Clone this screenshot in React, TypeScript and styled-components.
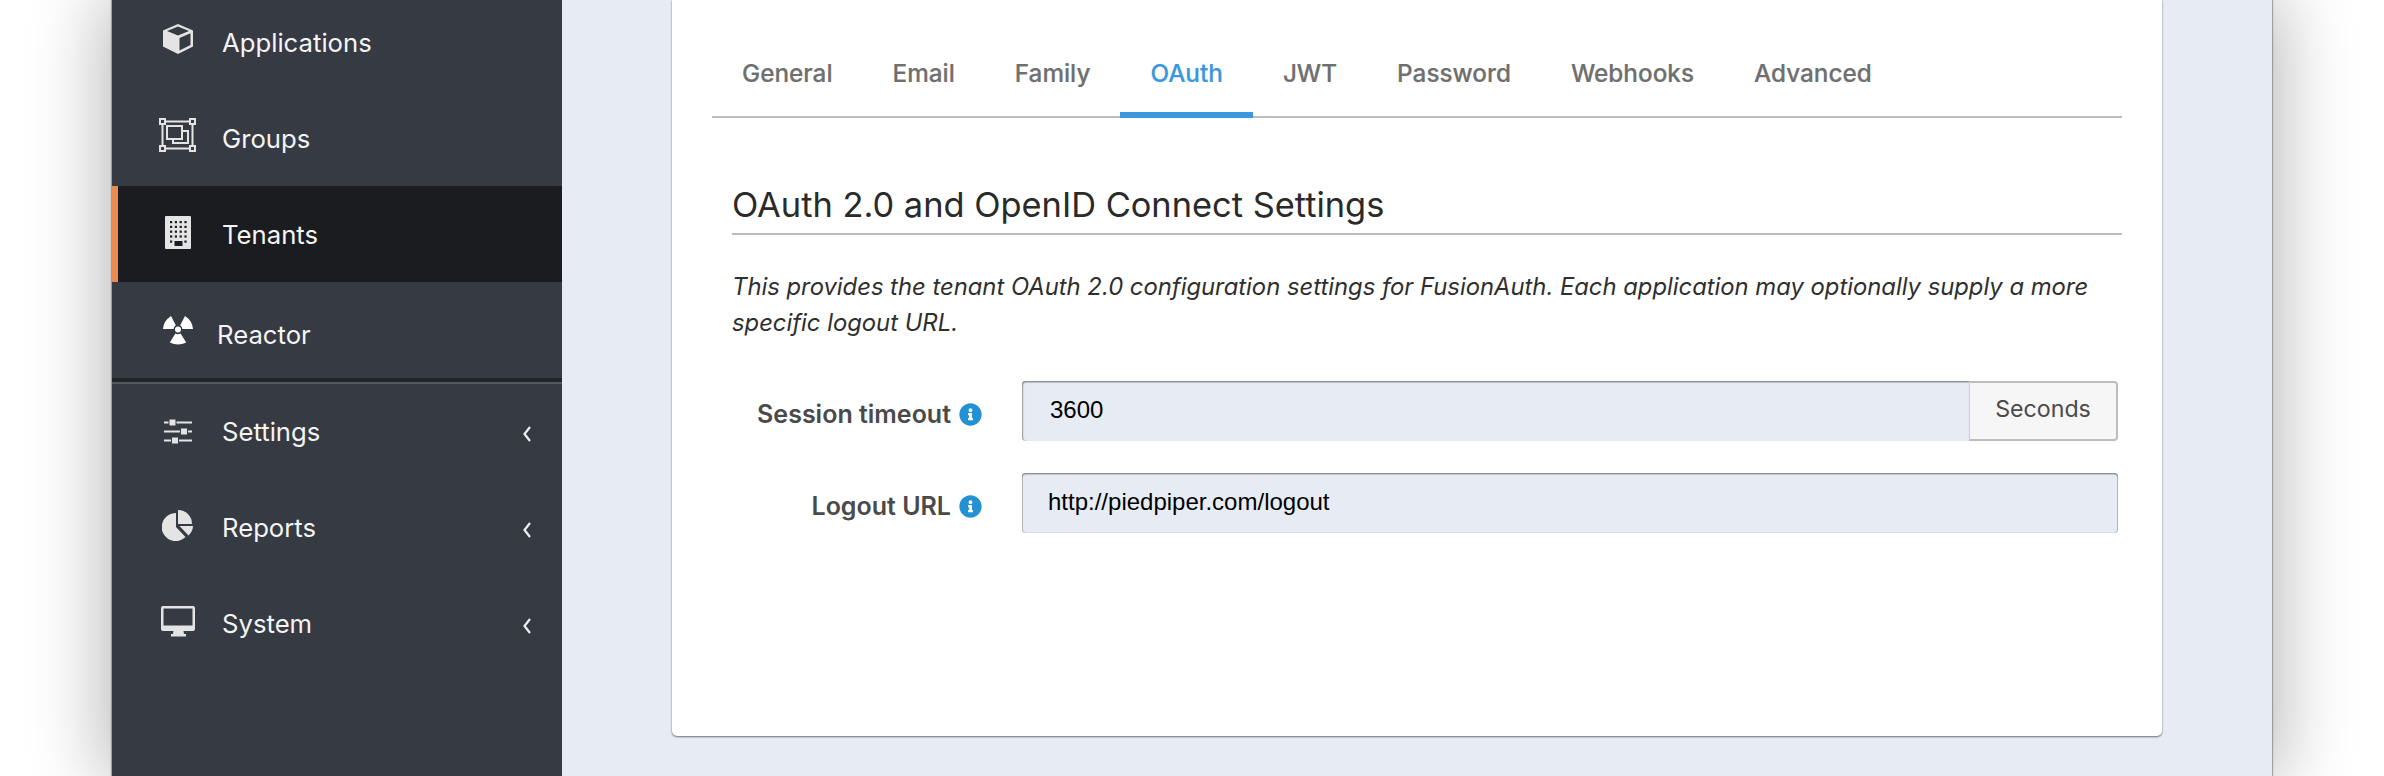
import React from 'react';
import styled, { createGlobalStyle } from 'styled-components';
import { FaInfoCircle } from 'react-icons/fa';

const GlobalStyle = createGlobalStyle`
  html, body {
    margin: 0;
    padding: 0;
    background: #fff;
    overflow: hidden;
  }
  * {
    box-sizing: border-box;
  }
`;

const Page = styled.div`
  height: 776px;
  padding: 0 112px 0 112px;
  overflow: hidden;
  font-family: Inter, 'Noto Sans', sans-serif;
`;

const Shell = styled.div`
  display: flex;
  height: 776px;
  background: #e7ecf4;
  box-shadow: 0 0 1px 1px rgba(110, 110, 110, 0.55), 0 0 70px 6px rgba(0, 0, 0, 0.3);
`;

const Sidebar = styled.aside`
  width: 450px;
  flex: none;
  background: #363a42;
  overflow: hidden;
`;

const NavList = styled.nav`
  margin-top: -6px;
`;

const NavRow = styled.div<{ $active?: boolean }>`
  display: flex;
  align-items: center;
  height: 96px;
  padding-left: ${p => (p.$active ? '34.5px' : '40.5px')};
  padding-right: 30px;
  background: ${p => (p.$active ? '#1b1c1f' : 'transparent')};
  border-left: ${p => (p.$active ? '6px solid #ea8c50' : 'none')};
  color: #f4f4f4;
`;

const IconSlot = styled.span<{ $lift: number }>`
  display: flex;
  justify-content: center;
  width: 50px;
  flex: none;
  margin-bottom: ${p => p.$lift}px;
`;

const NavLabel = styled.span<{ $nudge?: number; $drop?: number }>`
  margin-left: ${p => 19.5 + (p.$nudge ?? 0)}px;
  margin-top: ${p => p.$drop ?? 0}px;
  font-size: 25.7px;
  font-weight: 400;
  line-height: 30px;
  flex: 1;
`;

const NavChevron = styled.svg`
  flex: none;
  width: 10px;
  height: 18px;
  margin-top: 4px;
`;

const NavDivider = styled.div`
  height: 6px;
  background: #22252a;
  border-bottom: 2px solid #55585e;
`;

const Main = styled.main`
  flex: 1;
  padding: 0 110px 40px 110px;
  min-width: 0;
`;

const Card = styled.section`
  height: 736px;
  background: #fff;
  border-radius: 0 0 5px 5px;
  box-shadow: 0 1px 2px rgba(70, 75, 85, 0.75), 0 0 1px rgba(90, 95, 105, 0.5);
  padding: 40px 40px 0 40px;
`;

const TabBar = styled.div`
  display: flex;
  height: 78px;
  border-bottom: 2px solid #bcbcbc;
`;

const Tab = styled.div<{ $active?: boolean }>`
  height: 78px;
  padding: 0 30px;
  display: flex;
  align-items: center;
  padding-bottom: 12px;
  font-size: 24.3px;
  font-weight: 500;
  -webkit-text-stroke: 0.2px currentColor;
  color: ${p => (p.$active ? '#3b97de' : '#6f6f6f')};
  border-bottom: ${p => (p.$active ? '6px solid #3b97de' : 'none')};
  ${p => p.$active && 'padding-bottom: 6px;'}
`;

const Section = styled.div`
  padding-left: 20px;
`;

const Heading = styled.h2`
  margin: 66px 0 0 0;
  height: 51px;
  font-size: 34.4px;
  line-height: 42px;
  font-weight: 400;
  color: #2a2a2a;
  border-bottom: 2px solid #bcbcbc;
`;

const Intro = styled.p`
  margin: 34px 0 0 0;
  font-size: 23.8px;
  line-height: 36px;
  font-style: italic;
  color: #2f2f2f;
`;

const Form = styled.div`
  display: flex;
  flex-direction: column;
  gap: 32px;
  margin-top: 40px;
`;

const FieldRow = styled.div`
  display: flex;
  align-items: center;
  height: 60px;
`;

const FieldLabel = styled.label`
  display: flex;
  align-items: center;
  justify-content: flex-end;
  gap: 8px;
  width: 250px;
  flex: none;
  margin-top: 6px;
  font-size: 25px;
  font-weight: 600;
  color: #4a4a4a;
`;

const InfoIcon = styled(FaInfoCircle)`
  width: 23px;
  height: 23px;
  color: #2491d4;
`;

const FieldControl = styled.div`
  display: flex;
  flex: 1;
  height: 60px;
  margin-left: 40px;
  margin-right: 4px;
`;

const TextInput = styled.div<{ $grouped?: boolean; $left: number }>`
  flex: 1;
  height: 60px;
  padding-left: ${p => p.$left}px;
  padding-bottom: 2px;
  display: flex;
  align-items: center;
  font-family: 'Liberation Sans', Arial, sans-serif;
  font-size: 24px;
  color: #000;
  background: #e7ecf4;
  border-radius: ${p => (p.$grouped ? '4px 0 0 4px' : '4px')};
  box-shadow: ${p =>
    p.$grouped
      ? 'inset 0 1px 0 #8e9094, inset 0 2px 1px rgba(0, 0, 0, 0.18), inset 1px 0 0 #a8aaae, inset 2px 0 1px rgba(0, 0, 0, 0.08)'
      : 'inset 0 1px 0 #8e9094, inset 0 2px 1px rgba(0, 0, 0, 0.18), inset 1px 0 0 #b4b6ba, inset -1px 0 0 #b4b6ba, inset 0 -1px 0 #dde1e7'};
`;

const Addon = styled.div`
  width: 149px;
  flex: none;
  display: flex;
  align-items: center;
  justify-content: center;
  padding-bottom: 5px;
  font-size: 23.2px;
  color: #4a4a4a;
  background: #f6f6f6;
  border: 2px solid #bdbdbd;
  border-left: 1px solid #d0d0d0;
  border-radius: 0 4px 4px 0;
`;

const ICON = '#e4e4e4';

const CubeIcon = () => (
  <svg width="30" height="30" viewBox="0 0 30 30">
    <path
      fill={ICON}
      fillRule="evenodd"
      d="M15 0 L30 6.5 V22.5 L15 30 L0 22.5 V6.5 Z M4 7 L15 11.5 L26 7 L15 2.6 Z M16.5 14 V26.5 L27.5 21 V9.2 Z"
    />
  </svg>
);

const GroupsIcon = () => (
  <svg width="37" height="34" viewBox="0 0 37 34" fill="none" stroke={ICON} strokeWidth="2">
    <rect x="1" y="1" width="5" height="5" />
    <rect x="31" y="1" width="5" height="5" />
    <rect x="1" y="28" width="5" height="5" />
    <rect x="31" y="28" width="5" height="5" />
    <path d="M6 3.5 H31 M6 30.5 H31 M3.5 6 V28 M33.5 6 V28" />
    <rect x="8" y="8" width="15" height="13" />
    <path d="M23 13 H29 V25 H14 V21" />
  </svg>
);

const BuildingIcon = () => {
  const dots: React.ReactNode[] = [];
  for (let r = 0; r < 4; r += 1) {
    for (let c = 0; c < 4; c += 1) {
      dots.push(<rect key={`${r}-${c}`} x={5 + c * 4.8} y={5 + r * 4.8} width="2.2" height="2.2" fill="#1b1c1f" />);
    }
  }
  return (
    <svg width="26" height="33" viewBox="0 0 26 33">
      <rect x="0" y="0" width="26" height="33" rx="1" fill={ICON} />
      {dots}
      <rect x="5" y="24.5" width="2.2" height="2.2" fill="#1b1c1f" />
      <rect x="19.4" y="24.5" width="2.2" height="2.2" fill="#1b1c1f" />
      <rect x="9.5" y="25" width="8" height="5" fill="#1b1c1f" />
    </svg>
  );
};

const ReactorIcon = () => (
  <svg width="30" height="29" viewBox="0 0 30 29">
    <g fill="#fff">
      <circle cx="15" cy="13.5" r="3" />
      <path d="M8 0 L12.8 9.2 Q11 10.4 10.6 13 H0 Q0.5 5 8 0 Z" />
      <path d="M22 0 Q29.5 5 30 13 H19.4 Q19 10.4 17.2 9.2 Z" />
      <path d="M12.4 17.6 Q15 19 17.6 17.6 L23.2 26.6 Q15 30.6 6.8 26.6 Z" />
    </g>
  </svg>
);

const SlidersIcon = () => (
  <svg width="28" height="25" viewBox="0 0 28 25" fill={ICON}>
    <rect x="0" y="2.5" width="28" height="2" />
    <rect x="0" y="11.5" width="28" height="2" />
    <rect x="0" y="20.5" width="28" height="2" />
    <rect x="5" y="0" width="7" height="7" rx="1" stroke="#363a42" strokeWidth="1" />
    <rect x="16.5" y="9" width="7" height="7" rx="1" stroke="#363a42" strokeWidth="1" />
    <rect x="7.5" y="18" width="7" height="7" rx="1" stroke="#363a42" strokeWidth="1" />
  </svg>
);

const PieIcon = () => (
  <svg width="31" height="31" viewBox="0 0 31 31" fill={ICON}>
    <path d="M14 3 V17 L23.5 27 A14 14 0 1 1 14 3 Z" />
    <path d="M16 0 A14 14 0 0 1 30 14 H16 Z" />
    <path d="M17.5 16 H31 A14 14 0 0 1 26.5 25.5 Z" />
  </svg>
);

const DesktopIcon = () => (
  <svg width="34" height="31" viewBox="0 0 34 31">
    <path
      fill={ICON}
      fillRule="evenodd"
      d="M2 0 H32 A2 2 0 0 1 34 2 V23 A2 2 0 0 1 32 25 H22.5 L23 28 H25 V30.5 H10 V28 H12 L12.5 25 H2 A2 2 0 0 1 0 23 V2 A2 2 0 0 1 2 0 Z M2.5 2.5 V19.5 H31.5 V2.5 Z"
    />
  </svg>
);

const Chevron = () => (
  <NavChevron viewBox="0 0 10 18">
    <path d="M8 2 L2.5 9 L8 16" fill="none" stroke="#f0f0f0" strokeWidth="2.2" />
  </NavChevron>
);

const TABS = ['General', 'Email', 'Family', 'OAuth', 'JWT', 'Password', 'Webhooks', 'Advanced'];

export default function App() {
  return (
    <>
      <GlobalStyle />
      <Page>
        <Shell>
          <Sidebar>
            <NavList>
              <NavRow>
                <IconSlot $lift={6}><CubeIcon /></IconSlot>
                <NavLabel $drop={2}>Applications</NavLabel>
              </NavRow>
              <NavRow>
                <IconSlot $lift={6}><GroupsIcon /></IconSlot>
                <NavLabel $drop={1}>Groups</NavLabel>
              </NavRow>
              <NavRow $active>
                <IconSlot $lift={4}><BuildingIcon /></IconSlot>
                <NavLabel $drop={2}>Tenants</NavLabel>
              </NavRow>
              <NavRow>
                <IconSlot $lift={0}><ReactorIcon /></IconSlot>
                <NavLabel $nudge={-5} $drop={10}>Reactor</NavLabel>
              </NavRow>
              <NavDivider />
              <NavRow>
                <IconSlot $lift={1}><SlidersIcon /></IconSlot>
                <NavLabel $drop={-1}>Settings</NavLabel>
                <Chevron />
              </NavRow>
              <NavRow>
                <IconSlot $lift={6}><PieIcon /></IconSlot>
                <NavLabel $drop={-1}>Reports</NavLabel>
                <Chevron />
              </NavRow>
              <NavRow>
                <IconSlot $lift={6}><DesktopIcon /></IconSlot>
                <NavLabel $drop={-1}>System</NavLabel>
                <Chevron />
              </NavRow>
            </NavList>
          </Sidebar>
          <Main>
            <Card>
              <TabBar>
                {TABS.map(tab => (
                  <Tab key={tab} $active={tab === 'OAuth'}>{tab}</Tab>
                ))}
              </TabBar>
              <Section>
                <Heading>OAuth 2.0 and OpenID Connect Settings</Heading>
                <Intro>
                  This provides the tenant OAuth 2.0 configuration settings for FusionAuth. Each application may optionally supply a more specific logout URL.
                </Intro>
                <Form>
                  <FieldRow>
                    <FieldLabel>Session timeout <InfoIcon /></FieldLabel>
                    <FieldControl>
                      <TextInput $grouped $left={28}>3600</TextInput>
                      <Addon>Seconds</Addon>
                    </FieldControl>
                  </FieldRow>
                  <FieldRow>
                    <FieldLabel>Logout URL <InfoIcon /></FieldLabel>
                    <FieldControl>
                      <TextInput $left={26}>http://piedpiper.com/logout</TextInput>
                    </FieldControl>
                  </FieldRow>
                </Form>
              </Section>
            </Card>
          </Main>
        </Shell>
      </Page>
    </>
  );
}
